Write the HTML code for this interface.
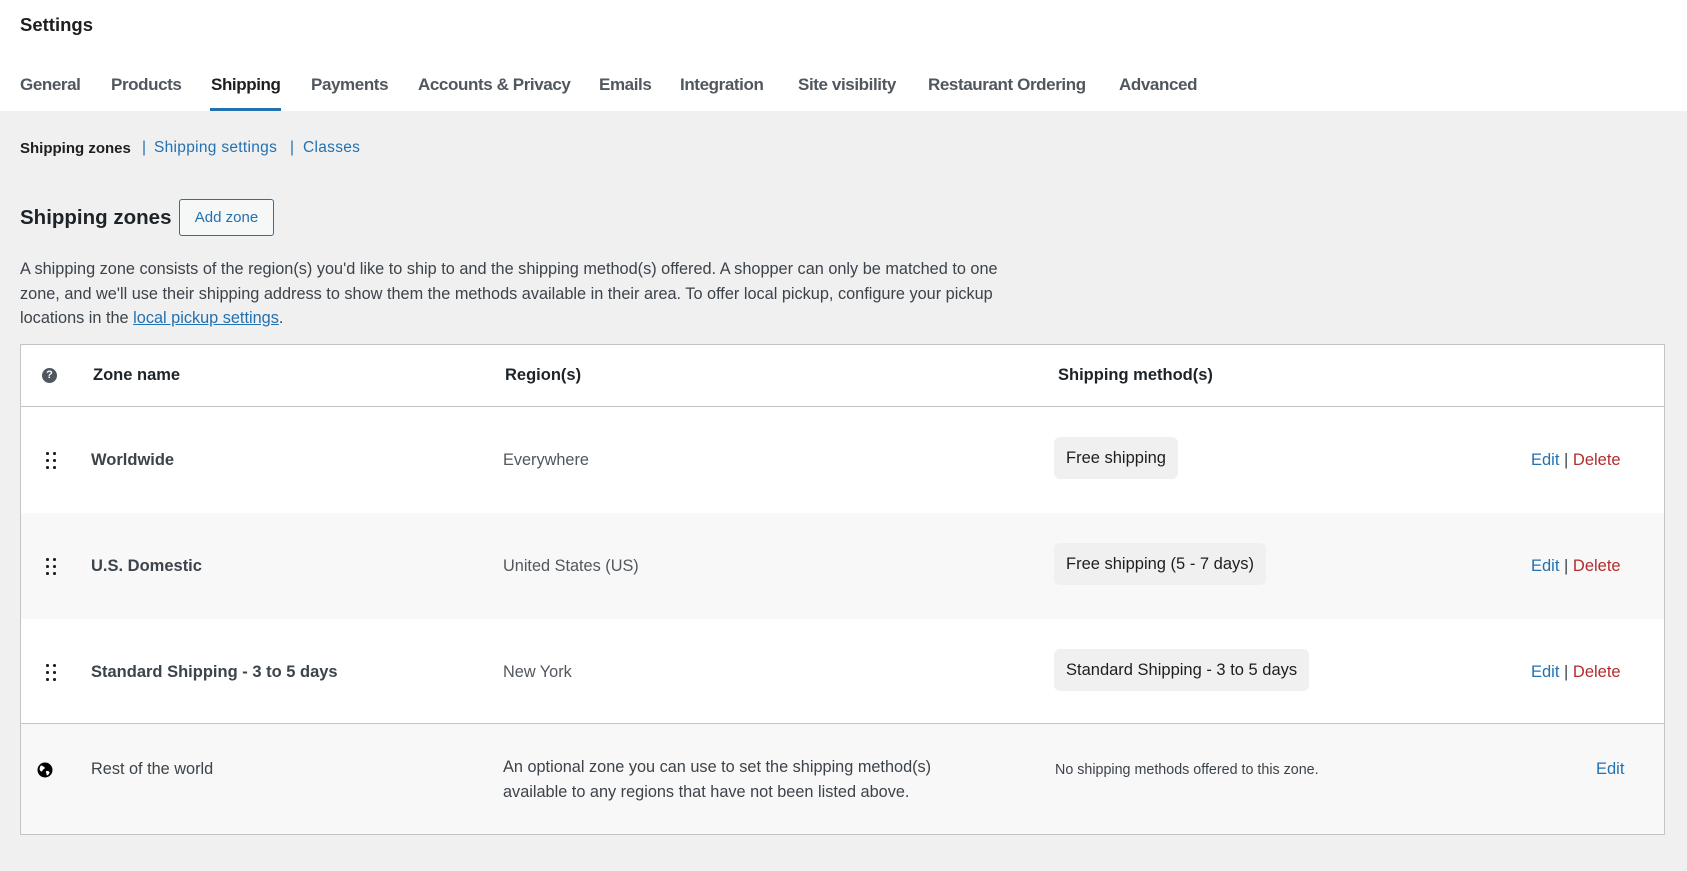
<!DOCTYPE html>
<html><head><meta charset="utf-8"><style>
*{margin:0;padding:0;box-sizing:border-box}
body{width:1687px;height:871px;background:#f0f0f0;font-family:"Liberation Sans",Arial,sans-serif;color:#3c434a;position:relative;overflow:hidden}
.a{position:absolute;white-space:nowrap}
.hdr{position:absolute;left:0;top:0;width:1687px;height:111px;background:#fff}
.tab{position:absolute;top:75px;font-size:17px;font-weight:bold;color:#50575e;letter-spacing:-0.4px}
.blue{color:#2271b1}
.tbl{position:absolute;left:20px;top:344px;width:1645px;height:491px;border:1px solid #c3c4c7;background:#fff}
.row{position:absolute;left:0;width:1643px}
.pill{position:absolute;background:#f0f0f0;border-radius:6px;height:42px;line-height:42px;padding:0 12px;font-size:16.5px;color:#1e1e1e}
.drag{position:absolute;left:25px;width:10px;height:16px}
.drag i{position:absolute;width:2.5px;height:2.5px;background:#1e1e1e;border-radius:50%}
.zn{position:absolute;left:70px;font-size:16.5px;font-weight:bold;color:#3c434a}
.rg{position:absolute;left:482px;font-size:16.3px;color:#50575e}
.act{position:absolute;left:1510px;font-size:16.5px}
.del{color:#b32d2e}
</style></head><body>
<div class="hdr"></div>
<div class="a" style="left:20px;top:14px;font-size:18.5px;font-weight:bold;color:#1e1e1e">Settings</div>
<div class="tab" style="left:20px">General</div>
<div class="tab" style="left:111px">Products</div>
<div class="tab" style="left:211px;color:#1e1e1e">Shipping</div>
<div class="a" style="left:210px;top:108px;width:71px;height:3px;background:#2271b1"></div>
<div class="tab" style="left:311px">Payments</div>
<div class="tab" style="left:418px">Accounts &amp; Privacy</div>
<div class="tab" style="left:599px">Emails</div>
<div class="tab" style="left:680px">Integration</div>
<div class="tab" style="left:798px">Site visibility</div>
<div class="tab" style="left:928px">Restaurant Ordering</div>
<div class="tab" style="left:1119px">Advanced</div>

<div class="a" style="left:20px;top:140px;font-size:15px;font-weight:bold;color:#1e1e1e">Shipping zones</div>
<div class="a blue" style="left:142px;top:139px;font-size:15.5px">|</div>
<div class="a blue" style="left:154px;top:139px;font-size:15.5px;letter-spacing:0.3px">Shipping settings</div>
<div class="a blue" style="left:290px;top:139px;font-size:15.5px">|</div>
<div class="a blue" style="left:303px;top:139px;font-size:15.5px;letter-spacing:0.3px">Classes</div>

<div class="a" style="left:20px;top:206px;font-size:20.5px;font-weight:bold;color:#1d2327">Shipping zones</div>
<div class="a" style="left:179px;top:199px;width:95px;height:37px;border:1px solid #2271b1;border-radius:3px;background:#f6f7f7;color:#2271b1;font-size:15px;text-align:center;line-height:35px">Add zone</div>

<div class="a" style="left:20px;top:257px;font-size:16.3px;line-height:24.5px;color:#3c434a">A shipping zone consists of the region(s) you'd like to ship to and the shipping method(s) offered. A shopper can only be matched to one<br>zone, and we'll use their shipping address to show them the methods available in their area. To offer local pickup, configure your pickup<br>locations in the <span style="color:#2271b1;text-decoration:underline">local pickup settings</span>.</div>

<div class="tbl">
 <div class="row" style="top:0;height:62px;border-bottom:1px solid #c3c4c7">
  <div class="a" style="left:21px;top:23px;width:15px;height:15px;border-radius:50%;background:#50575e;color:#fff;font-size:11px;font-weight:bold;text-align:center;line-height:15px">?</div>
  <div class="a" style="left:72px;top:21px;font-size:16.5px;font-weight:bold;color:#1d2327">Zone name</div>
  <div class="a" style="left:484px;top:21px;font-size:16.5px;font-weight:bold;color:#1d2327">Region(s)</div>
  <div class="a" style="left:1037px;top:21px;font-size:16.5px;font-weight:bold;color:#1d2327">Shipping method(s)</div>
 </div>
 <div class="row" style="top:62px;height:106px;background:#fff">
  <div class="drag" style="top:45px"><i style="left:0;top:0"></i><i style="left:7px;top:0"></i><i style="left:0;top:7px"></i><i style="left:7px;top:7px"></i><i style="left:0;top:14px"></i><i style="left:7px;top:14px"></i></div>
  <div class="zn" style="top:44px">Worldwide</div>
  <div class="rg" style="top:44px">Everywhere</div>
  <div class="pill" style="left:1033px;top:30px">Free shipping</div>
  <div class="act" style="top:44px"><span class="blue">Edit</span> | <span class="del">Delete</span></div>
 </div>
 <div class="row" style="top:168px;height:106px;background:#f8f8f8">
  <div class="drag" style="top:45px"><i style="left:0;top:0"></i><i style="left:7px;top:0"></i><i style="left:0;top:7px"></i><i style="left:7px;top:7px"></i><i style="left:0;top:14px"></i><i style="left:7px;top:14px"></i></div>
  <div class="zn" style="top:44px">U.S. Domestic</div>
  <div class="rg" style="top:44px">United States (US)</div>
  <div class="pill" style="left:1033px;top:30px">Free shipping (5 - 7 days)</div>
  <div class="act" style="top:44px"><span class="blue">Edit</span> | <span class="del">Delete</span></div>
 </div>
 <div class="row" style="top:274px;height:105px;background:#fff;border-bottom:1px solid #c3c4c7">
  <div class="drag" style="top:45px"><i style="left:0;top:0"></i><i style="left:7px;top:0"></i><i style="left:0;top:7px"></i><i style="left:7px;top:7px"></i><i style="left:0;top:14px"></i><i style="left:7px;top:14px"></i></div>
  <div class="zn" style="top:44px">Standard Shipping - 3 to 5 days</div>
  <div class="rg" style="top:44px">New York</div>
  <div class="pill" style="left:1033px;top:30px">Standard Shipping - 3 to 5 days</div>
  <div class="act" style="top:44px"><span class="blue">Edit</span> | <span class="del">Delete</span></div>
 </div>
 <div class="row" style="top:379px;height:110px;background:#f8f8f8">
  <svg class="a" style="left:16px;top:38px" width="16" height="16" viewBox="0 0 16 16"><circle cx="8" cy="8" r="7.5" fill="#000"/><path d="M4 3.5c1.5 0 2 1 3.2 1.5 1 .5.5 2-.6 2.3-1 .3-.8 1.6-1.8 2.2C4 10 3 8.5 2.6 7.2 2.7 5.5 3.2 4.3 4 3.5zM9.5 9c1.2-.3 2.8.3 3 1.3.2 1.2-1.2 2.8-2.6 3.2-.6-1-.2-2-.8-2.8-.4-.8-.2-1.5.4-1.7z" fill="#fff"/></svg>
  <div class="a" style="left:70px;top:36px;font-size:16.3px;color:#3c434a">Rest of the world</div>
  <div class="a" style="left:482px;top:31px;font-size:16.3px;line-height:25px;color:#3c434a">An optional zone you can use to set the shipping method(s)<br>available to any regions that have not been listed above.</div>
  <div class="a" style="left:1034px;top:38px;font-size:14.3px;color:#3c434a">No shipping methods offered to this zone.</div>
  <div class="a blue" style="left:1575px;top:36px;font-size:16.5px">Edit</div>
 </div>
</div>
</body></html>
